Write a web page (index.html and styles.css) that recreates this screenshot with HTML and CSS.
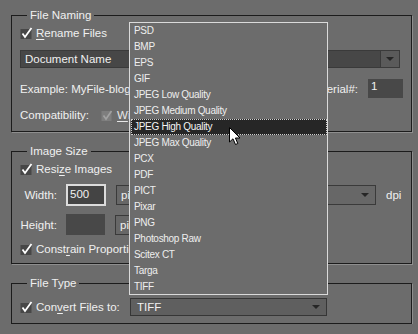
FILE: index.html
```html
<!DOCTYPE html>
<html lang="en">
<head>
    <meta charset="UTF-8">
    <meta name="viewport" content="width=device-width, initial-scale=1.0">
    <title>Process Multiple Files</title>
    <link rel="stylesheet" href="styles.css">
</head>
<body>
    <fieldset class="group">
        <legend>File Naming</legend>
        <label class="check">
            <svg class="box" width="13" height="13" viewBox="0 0 13 13"><rect x="0.5" y="2" width="11" height="10" fill="#474747"/><path d="M2.5 6.5 L5 10 L11.5 1" stroke="#fff" stroke-width="1.8" fill="none"/></svg>
            <span><u>R</u>ename Files</span>
        </label>
        <div class="select select-name">
            <span class="value">Document Name</span>
            <span class="arrow-box"><i class="arrow"></i></span>
        </div>
        <div class="row example-row">
            <span>Example: MyFile-blog001.gif</span>
            <span class="serial">
                <span>Starting Serial#:</span>
                <span class="field serial-field">1</span>
            </span>
        </div>
        <div class="row compat-row">
            <span>Compatibility:</span>
            <label class="check disabled">
                <svg class="box" width="13" height="13" viewBox="0 0 13 13"><rect x="0.5" y="2" width="10" height="10" fill="#7e7e7e"/><path d="M2.5 6.5 L5 10 L10.5 2" stroke="#a2a2a2" stroke-width="1.6" fill="none"/></svg>
                <span><u>W</u>indows</span>
            </label>
        </div>
    </fieldset>

    <fieldset class="group">
        <legend>Image Size</legend>
        <label class="check">
            <svg class="box" width="13" height="13" viewBox="0 0 13 13"><rect x="0.5" y="2" width="11" height="10" fill="#474747"/><path d="M2.5 6.5 L5 10 L11.5 1" stroke="#fff" stroke-width="1.8" fill="none"/></svg>
            <span>Resi<u>z</u>e Images</span>
        </label>
        <div class="row size-row">
            <span class="size-label">Width:</span>
            <span class="field size-input focused">500</span>
            <div class="select unit-select">
                <span class="value">pixels</span>
                <i class="arrow"></i>
            </div>
            <span class="unit">dpi</span>
        </div>
        <div class="row size-row height-row">
            <span class="size-label">Height:</span>
            <span class="field size-input"></span>
            <div class="select unit-select short">
                <span class="value">pixels</span>
                <i class="arrow"></i>
            </div>
        </div>
        <label class="check constrain">
            <svg class="box" width="13" height="13" viewBox="0 0 13 13"><rect x="0.5" y="2" width="11" height="10" fill="#474747"/><path d="M2.5 6.5 L5 10 L11.5 1" stroke="#fff" stroke-width="1.8" fill="none"/></svg>
            <span>Const<u>r</u>ain Proportions</span>
        </label>
    </fieldset>

    <fieldset class="group">
        <legend>File Type</legend>
        <div class="row convert-row">
            <label class="check convert-label">
                <svg class="box" width="13" height="13" viewBox="0 0 13 13"><rect x="0.5" y="2" width="11" height="10" fill="#474747"/><path d="M2.5 6.5 L5 10 L11.5 1" stroke="#fff" stroke-width="1.8" fill="none"/></svg>
                <span>Con<u>v</u>ert Files to:</span>
            </label>
            <div class="select type-select">
                <span class="value">TIFF</span>
                <i class="arrow"></i>
            </div>
        </div>
    </fieldset>

    <ul class="dropdown-list">
        <li>PSD</li>
        <li>BMP</li>
        <li>EPS</li>
        <li>GIF</li>
        <li>JPEG Low Quality</li>
        <li>JPEG Medium Quality</li>
        <li class="active">JPEG High Quality</li>
        <li>JPEG Max Quality</li>
        <li>PCX</li>
        <li>PDF</li>
        <li>PICT</li>
        <li>Pixar</li>
        <li>PNG</li>
        <li>Photoshop Raw</li>
        <li>Scitex CT</li>
        <li>Targa</li>
        <li>TIFF</li>
    </ul>

    <svg class="cursor" width="13" height="20" viewBox="0 0 13 20"><path d="M0.5 0.5 L0.5 15 L4 11.8 L6.5 17.5 L8.8 16.5 L6.4 11 L11 11 Z" fill="#fff" stroke="#000" stroke-width="1"/></svg>
</body>
</html>
```

FILE: styles.css
```css
/* Dialog base */
body {
    margin: 0;
    padding: 8px 6px 0 11px;
    background-color: #6c6c6c;
    color: #f0f0f0;
    font-family: "Liberation Sans", Arial, sans-serif;
    font-size: 11.5px;
    position: relative;
}

u {
    text-decoration-thickness: 1px;
    text-underline-offset: 2px;
}

/* Group boxes */
.group {
    margin: 12px 0 0 0;
    padding: 4px 8px 7px 8px;
    width: 401px;
    box-sizing: border-box;
    min-width: 0;
    border: 1px solid #1c1c1c;
    box-shadow: 1px 1px 0 #8e8e8e;
}

.group:first-child {
    margin-top: 0;
}

.group legend {
    margin-left: 7px;
    padding: 0 3px;
    line-height: 14px;
}

/* Checkbox rows */
.check {
    display: flex;
    align-items: center;
    gap: 3px;
    height: 14px;
    white-space: nowrap;
}

.check .box {
    flex: none;
}

.row {
    display: flex;
    align-items: center;
    white-space: nowrap;
}

/* Selects */
.select {
    display: flex;
    align-items: center;
    box-sizing: border-box;
    border: 1px solid #3a3a3a;
}

.select .value {
    flex: 1;
    padding-left: 4px;
    overflow: hidden;
}

.arrow {
    display: block;
    width: 0;
    height: 0;
    border-left: 4px solid transparent;
    border-right: 4px solid transparent;
    border-top: 4px solid #262626;
    margin-right: 6px;
}

.select-name {
    margin-top: 10px;
    width: 380px;
    height: 18px;
    background-color: #474747;
}

.select-name .arrow-box {
    width: 18px;
    height: 100%;
    display: flex;
    align-items: center;
    justify-content: center;
    border-left: 1px solid #3a3a3a;
    background-color: #5a5a5a;
}

.select-name .arrow {
    margin-right: 0;
}

/* Text fields */
.field {
    box-sizing: border-box;
    background-color: #484848;
    padding: 1px 3px;
}

.example-row {
    margin-top: 11px;
    height: 19px;
    justify-content: space-between;
}

.serial {
    display: flex;
    align-items: center;
    gap: 10px;
}

.serial-field {
    width: 35px;
    height: 19px;
}

.compat-row {
    margin-top: 8px;
    height: 18px;
    gap: 12px;
}

.disabled {
    color: #e6e6e6;
}

/* Image size */
.size-row {
    margin-top: 8px;
    height: 22px;
}

.height-row {
    height: 21px;
}

.size-label {
    width: 37px;
    text-align: right;
    margin-right: 9px;
}

.size-input {
    width: 40px;
    height: 22px;
    padding: 2px 3px;
    line-height: 16px;
}

.size-input.focused {
    border: 2px solid #dcdcdc;
    padding: 0 2px;
    background-color: #444;
}

.height-row .size-input {
    width: 39px;
    height: 21px;
}

.unit-select {
    margin-left: 10px;
    width: 260px;
    height: 20px;
    background-color: #676767;
}

.unit-select.short {
    width: 200px;
}

.unit {
    margin-left: 10px;
}

.constrain {
    margin-top: 7px;
}

/* File type */
.convert-row {
    margin-top: 4px;
    height: 18px;
}

.convert-label {
    width: 110px;
}

.type-select {
    width: 197px;
    height: 18px;
    background-color: #5f5f5f;
    border-color: #363636;
}

.type-select .value {
    padding-left: 6px;
}

/* Open format list */
.dropdown-list {
    position: absolute;
    left: 129px;
    top: 22px;
    width: 199px;
    height: 273px;
    box-sizing: border-box;
    margin: 0;
    padding: 0;
    list-style: none;
    background-color: #6c6c6c;
    border: 1px solid #dadada;
    font-size: 10px;
    letter-spacing: -0.3px;
    color: #eeeeee;
}

.dropdown-list li {
    height: 16px;
    line-height: 16px;
    padding-left: 4px;
    white-space: nowrap;
}

.dropdown-list li.active {
    margin-left: 1px;
    padding-left: 2px;
    box-sizing: border-box;
    background-color: #262626;
    border: 1px dotted #cfcfcf;
    line-height: 14px;
    color: #f4f4f4;
}

.cursor {
    position: absolute;
    left: 229px;
    top: 127px;
}
```
